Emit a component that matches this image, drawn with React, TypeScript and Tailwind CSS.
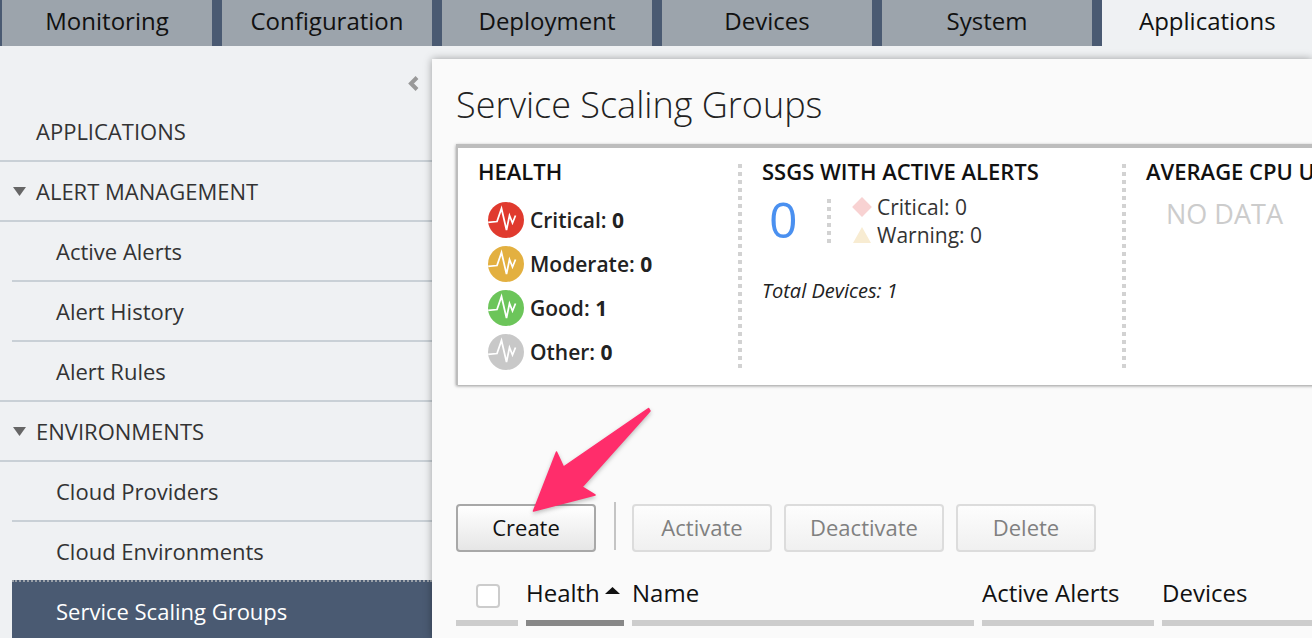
const TABS = ["Monitoring", "Configuration", "Deployment", "Devices", "System"];

const HEALTH = [
  { label: "Critical:", count: "0", color: "bg-[#e03a2e]" },
  { label: "Moderate:", count: "0", color: "bg-[#e3b040]" },
  { label: "Good:", count: "1", color: "bg-[#6cc55a]" },
  { label: "Other:", count: "0", color: "bg-[#c8c8c8]" },
];

function Pulse({ color }: { color: string }) {
  return (
    <span className={`h-9 w-9 rounded-full overflow-hidden shrink-0 ${color}`}>
      <svg viewBox="0 0 36 36" className="h-9 w-9" fill="none" stroke="white" strokeWidth="1.75">
        <path d="M0 20.5 L9 19.5 L13.5 6.5 L18.5 28 L21.5 13.5 L24.5 21 L27.5 13.5" />
      </svg>
    </span>
  );
}

function SideRow({ label, indent, full, arrow }: { label: string; indent: string; full?: boolean; arrow?: boolean }) {
  return (
    <div className={`h-[60px] flex items-center border-b-2 border-[#c9d0d6] ${full ? "" : "ml-3"}`}>
      {arrow && (
        <svg width="13" height="9" viewBox="0 0 13 9" className="ml-[13px] mr-[10px] fill-[#666666]">
          <path d="M0 0 H13 L6.5 9 Z" />
        </svg>
      )}
      <span className={`text-[22px] text-[#333333] ${indent}`}>{label}</span>
    </div>
  );
}

function Dots({ className }: { className: string }) {
  return <div className={`w-1 bg-[linear-gradient(#d2d2d2_50%,transparent_50%)] bg-[length:4px_8px] ${className}`} />;
}

function ActionButton({ label, width, active }: { label: string; width: string; active?: boolean }) {
  return (
    <button
      type="button"
      className={`${width} h-12 rounded border-2 bg-gradient-to-b pb-[2px] text-[22px] ${
        active
          ? "border-[#a8a8a8] from-white to-[#e6e6e6] text-[#111111]"
          : "border-[#dcdcdc] from-[#fdfdfd] to-[#f0f0f0] text-[#808080]"
      }`}
    >
      {label}
    </button>
  );
}

export default function App() {
  return (
    <div className="relative h-[638px] w-[1312px] overflow-hidden bg-[#eff1f3] font-['Open_Sans',sans-serif]">
      {/* Top tabs */}
      <div className="flex h-[46px] bg-[#4a5a72] pl-[2px] gap-[10px]">
        {TABS.map(tab => (
          <div key={tab} className="w-[210px] pb-1 flex items-center justify-center bg-[#9ca4ac] text-[24px] text-[#111111]">
            {tab}
          </div>
        ))}
        <div className="flex-1 pb-1 flex items-center bg-[#eff1f3] pl-[37px] text-[24px] text-[#111111]">Applications</div>
      </div>

      <div className="flex h-[592px]">
        {/* Sidebar */}
        <div className="w-[432px] shrink-0">
          <div className="h-[56px] flex justify-end pr-[13px] pt-[30px]">
            <svg width="11" height="15" viewBox="0 0 11 15" fill="none" stroke="#999999" strokeWidth="4">
              <path d="M9 1.5 L3 7.5 L9 13.5" />
            </svg>
          </div>
          <SideRow label="APPLICATIONS" indent="pl-9" full />
          <SideRow label="ALERT MANAGEMENT" indent="" full arrow />
          <SideRow label="Active Alerts" indent="pl-[44px]" />
          <SideRow label="Alert History" indent="pl-[44px]" />
          <SideRow label="Alert Rules" indent="pl-14" full />
          <SideRow label="ENVIRONMENTS" indent="" full arrow />
          <SideRow label="Cloud Providers" indent="pl-[44px]" />
          <div className="h-[58px] ml-3 flex items-center">
            <span className="text-[22px] text-[#333333] pl-[44px]">Cloud Environments</span>
          </div>
          <div className="ml-3 h-[60px] border-t-2 border-dotted border-[#9aa0a8] bg-[#4a5a72] flex items-center">
            <span className="pl-[44px] text-[22px] font-medium text-white">Service Scaling Groups</span>
          </div>
        </div>

        {/* Main panel */}
        <div className="relative mt-[13px] flex-1 overflow-hidden bg-[#fafafa] pl-6 shadow-[0_0_8px_rgba(0,0,0,0.35)]">
          <h1 className="h-[85px] pt-[23px] text-[36px] leading-[46px] font-light text-[#222222] whitespace-nowrap">
            Service Scaling Groups
          </h1>

          {/* Summary card */}
          <div className="flex h-[241px] w-[900px] border-t-4 border-l-2 border-[#bdbdbd] bg-white shadow-[0_1px_3px_rgba(0,0,0,0.4)]">
            <div className="w-[280px] shrink-0 pl-5 pt-2">
              <div className="text-[22px] leading-[30px] font-semibold text-[#111111]">HEALTH</div>
              <div className="mt-4 ml-[10px] flex flex-col gap-2">
                {HEALTH.map(item => (
                  <div key={item.label} className="flex items-center gap-[6px] text-[21px] font-semibold text-[#222222]">
                    <Pulse color={item.color} />
                    <span className="pt-[2px]">{item.label} <span className="font-bold">{item.count}</span></span>
                  </div>
                ))}
              </div>
            </div>
            <Dots className="mt-4 h-[204px] shrink-0" />
            <div className="w-[380px] shrink-0 pl-[20px] pt-2">
              <div className="text-[22px] leading-[30px] font-semibold text-[#111111] whitespace-nowrap">SSGS WITH ACTIVE ALERTS</div>
              <div className="flex mt-[7px] h-[60px]">
                <div className="w-[65px] pl-[7px] -mt-[6px] text-[50px] leading-[64px] text-[#4a90f0]">0</div>
                <Dots className="mt-[6px] h-[44px] shrink-0" />
                <div className="ml-[22px] flex flex-col text-[21px] leading-7 text-[#333333]">
                  <div className="flex items-center">
                    <span className="mr-[8px] ml-[2px] h-[14px] w-[14px] rotate-45 bg-[#f8d2d2]" />
                    Critical: 0
                  </div>
                  <div className="flex items-center">
                    <svg width="18" height="16" viewBox="0 0 18 16" className="mr-[6px] fill-[#f8ecd2]">
                      <path d="M9 0 L18 16 H0 Z" />
                    </svg>
                    Warning: 0
                  </div>
                </div>
              </div>
              <div className="mt-[23px] text-[20px] italic text-[#222222]">Total Devices: 1</div>
            </div>
            <Dots className="mt-4 h-[204px] shrink-0" />
            <div className="pl-[20px] pt-2 whitespace-nowrap">
              <div className="text-[22px] leading-[30px] font-semibold text-[#111111]">AVERAGE CPU UTILIZATION</div>
              <div className="ml-5 mt-2 text-[27px] text-[#cccccc]">NO DATA</div>
            </div>
          </div>

          {/* Actions */}
          <div className="mt-[119px] flex items-start">
            <ActionButton label="Create" width="w-[140px]" active />
            <div className="ml-[18px] mr-4 -mt-[2px] h-12 w-[2px] bg-[#c4c4c4]" />
            <div className="flex gap-3">
              <ActionButton label="Activate" width="w-[140px]" />
              <ActionButton label="Deactivate" width="w-[160px]" />
              <ActionButton label="Delete" width="w-[140px]" />
            </div>
          </div>

          {/* Table header */}
          <div className="mt-3 grid grid-cols-[62px_98px_342px_172px_200px] gap-x-2 text-[24px] text-[#111111]">
            <div className="h-[62px] border-b-[6px] border-[#cdcdcd] pl-5 pt-[20px]">
              <div className="h-6 w-6 rounded border-2 border-[#cccccc] bg-white" />
            </div>
            <div className="h-[62px] border-b-[6px] border-[#888888] pt-[11px] flex items-start">
              <span className="leading-[36px]">Health</span>
              <svg width="15" height="7" viewBox="0 0 15 7" className="ml-[5px] mt-3 fill-[#111111]">
                <path d="M7.5 0 L15 7 H0 Z" />
              </svg>
            </div>
            <div className="h-[62px] border-b-[6px] border-[#cdcdcd] pt-[11px] leading-[36px]">Name</div>
            <div className="h-[62px] border-b-[6px] border-[#cdcdcd] pt-[11px] leading-[36px]">Active Alerts</div>
            <div className="h-[62px] border-b-[6px] border-[#cdcdcd] pt-[11px] leading-[36px]">Devices</div>
          </div>
        </div>
      </div>

      {/* Pink annotation arrow */}
      <svg width="1312" height="638" className="absolute inset-0 pointer-events-none drop-shadow-[0_2px_2px_rgba(0,0,0,0.25)]">
        <path
          d="M533.5 511 L556.5 452 L563.5 467 L648.5 408.5 L650 411 L582 487 L595 495 Z"
          fill="#ff2d6b"
          stroke="#ff2d6b"
          strokeWidth="1.5"
          strokeLinejoin="round"
        />
      </svg>
    </div>
  );
}
